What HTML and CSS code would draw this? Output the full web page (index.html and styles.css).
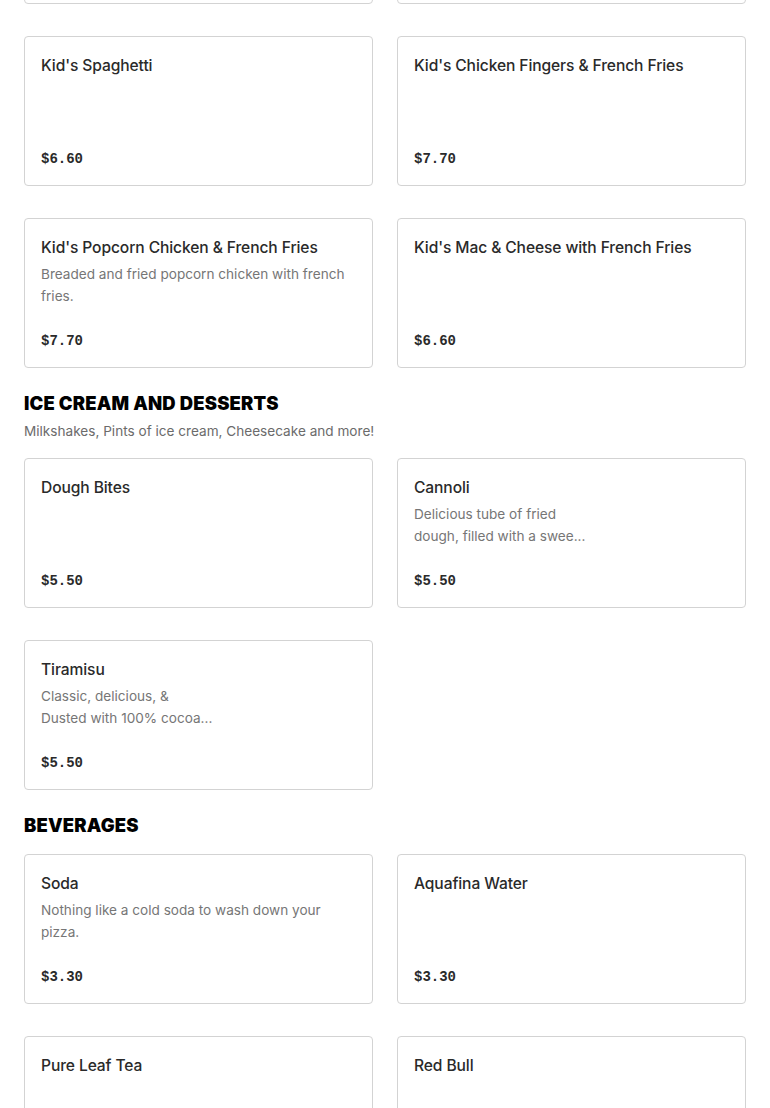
FILE: index.html
```html
<!DOCTYPE html>
<html>
<head>
<meta charset="utf-8">
<link rel="stylesheet" href="styles.css">
</head>
<body>
<main class="menu">
  <section class="section">
    <div class="grid">
      <div class="card" aria-hidden="true"></div>
      <div class="card" aria-hidden="true"></div>
      <div class="card">
        <h3 class="item-name">Kid's Spaghetti</h3>
        <div class="price">$6.60</div>
      </div>
      <div class="card">
        <h3 class="item-name">Kid's Chicken Fingers &amp; French Fries</h3>
        <div class="price">$7.70</div>
      </div>
      <div class="card">
        <h3 class="item-name">Kid's Popcorn Chicken &amp; French Fries</h3>
        <p class="item-desc">Breaded and fried popcorn chicken with french fries.</p>
        <div class="price">$7.70</div>
      </div>
      <div class="card">
        <h3 class="item-name">Kid's Mac &amp; Cheese with French Fries</h3>
        <div class="price">$6.60</div>
      </div>
    </div>
  </section>

  <section class="section">
    <header class="section-head">
      <h2 class="section-title">ICE CREAM AND DESSERTS</h2>
      <p class="section-desc">Milkshakes, Pints of ice cream, Cheesecake and more!</p>
    </header>
    <div class="grid">
      <div class="card">
        <h3 class="item-name">Dough Bites</h3>
        <div class="price">$5.50</div>
      </div>
      <div class="card">
        <h3 class="item-name">Cannoli</h3>
        <p class="item-desc">Delicious tube of fried<br>dough, filled with a swee...</p>
        <div class="price">$5.50</div>
      </div>
      <div class="card">
        <h3 class="item-name">Tiramisu</h3>
        <p class="item-desc">Classic, delicious, &amp;<br>Dusted with 100% cocoa...</p>
        <div class="price">$5.50</div>
      </div>
    </div>
  </section>

  <section class="section">
    <header class="section-head">
      <h2 class="section-title">BEVERAGES</h2>
    </header>
    <div class="grid">
      <div class="card">
        <h3 class="item-name">Soda</h3>
        <p class="item-desc">Nothing like a cold soda to wash down your pizza.</p>
        <div class="price">$3.30</div>
      </div>
      <div class="card">
        <h3 class="item-name">Aquafina Water</h3>
        <div class="price">$3.30</div>
      </div>
      <div class="card">
        <h3 class="item-name">Pure Leaf Tea</h3>
      </div>
      <div class="card">
        <h3 class="item-name">Red Bull</h3>
      </div>
    </div>
  </section>
</main>
</body>
</html>
```

FILE: styles.css
```css
html, body {
  margin: 0;
  padding: 0;
  background: #ffffff;
}

body {
  font-family: Inter, "Liberation Sans", Arial, sans-serif;
  color: #2b2b2b;
  overflow: hidden;
}

.menu {
  margin-top: -146px;
  padding: 0 24px;
}

.grid {
  display: grid;
  grid-template-columns: 1fr 1fr;
  column-gap: 24px;
  row-gap: 32px;
}

.card {
  box-sizing: border-box;
  height: 150px;
  border: 1px solid #d3d3d3;
  border-radius: 4px;
  padding: 16px;
  display: flex;
  flex-direction: column;
  background: #fff;
}

.item-name {
  margin: 0;
  padding-top: 1px;
  font-size: 15.6px;
  font-weight: 500;
  line-height: 24px;
  color: #2a2a2a;
  letter-spacing: -0.1px;
}

.item-desc {
  margin: 3px 0 0;
  font-size: 13.6px;
  line-height: 22px;
  color: #767676;
}

.price {
  margin-top: auto;
  font-family: "Liberation Mono", "DejaVu Sans Mono", monospace;
  font-weight: 700;
  font-size: 14px;
  line-height: 20px;
  color: #2a2a2a;
}

.section-head {
  margin: 23px 0 17px;
}

.section-title {
  margin: 0;
  font-size: 18.4px;
  font-weight: 900;
  line-height: 24px;
  color: #000;
  letter-spacing: 0.2px;
}

.section-desc {
  margin: 6px 0 0;
  font-size: 13.6px;
  line-height: 20px;
  color: #6b6b6b;
}
```
